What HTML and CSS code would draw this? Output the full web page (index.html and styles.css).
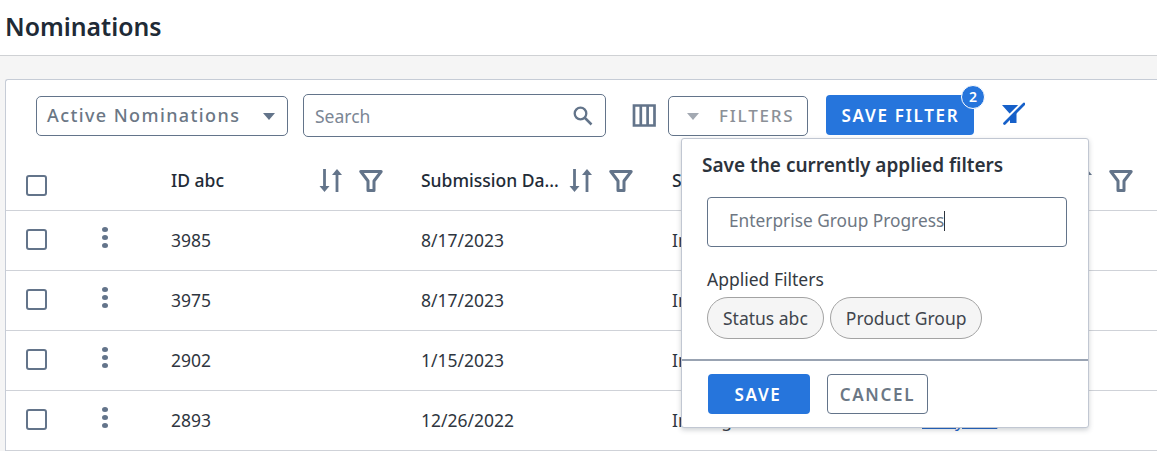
FILE: index.html
```html
<!DOCTYPE html>
<html lang="en">
<head>
<meta charset="utf-8">
<title>Nominations</title>
<link rel="stylesheet" href="styles.css">
</head>
<body>
<header class="page-head"><h1 class="title">Nominations</h1></header>
<main class="content">
  <section class="card">
    <div class="toolbar">
      <div class="select"><span>Active Nominations</span><span class="caret"></span></div>
      <div class="search"><span>Search</span>
        <svg class="search-icon" viewBox="0 0 20 20" width="20" height="20"><circle cx="7.500" cy="7.500" r="5.800" fill="none" stroke="#63748a" stroke-width="2.300"/><path d="M11.500 11.500l7 7" stroke="#63748a" stroke-width="2.500" fill="none"/></svg>
      </div>
      <svg class="columns-icon" viewBox="0 0 24 24" width="24" height="24"><path d="M2 2.500h20.500v20H2zM8.800 2.500v20M15.600 2.500v20" fill="none" stroke="#63748a" stroke-width="2.700"/></svg>
      <div class="filters"><span class="caret caret-light"></span><span class="filters-text">FILTERS</span></div>
      <div class="save-wrap">
        <button class="btn-primary save-filter">SAVE FILTER</button>
        <span class="badge">2</span>
      </div>
      <svg class="clear-icon" viewBox="0 0 24 24" width="24" height="24"><path d="M1 3H21L15.500 10.500V21H9V12Z" fill="#1660c9"/><path d="M3 19L21 1" stroke="#fff" stroke-width="2.600"/><path d="M2.500 22.500L23.500 1.500" stroke="#fff" stroke-width="1"/><path d="M3.500 21.500L23 2" stroke="#1660c9" stroke-width="2.700" stroke-linecap="round"/></svg>
    </div>

    <div class="row head">
      <div class="cell-check"><span class="check"></span></div>
      <div class="cell-menu"></div>
      <div class="cell col-id"><span class="label">ID abc</span><span class="icons"><svg class="sort" viewBox="0 0 24 24" width="24" height="24"><use href="#i-sort"/></svg><svg class="funnel" viewBox="0 0 24 24" width="24" height="24"><use href="#i-funnel"/></svg></span></div>
      <div class="cell col-date"><span class="label">Submission Da...</span><span class="icons"><svg class="sort" viewBox="0 0 24 24" width="24" height="24"><use href="#i-sort"/></svg><svg class="funnel" viewBox="0 0 24 24" width="24" height="24"><use href="#i-funnel"/></svg></span></div>
      <div class="cell col-status"><span class="label">Status abc</span></div>
      <div class="cell col-owner"><span class="label">Owner</span><span class="icons"><svg class="sort" viewBox="0 0 24 24" width="24" height="24"><use href="#i-sort"/></svg><svg class="funnel" viewBox="0 0 24 24" width="24" height="24"><use href="#i-funnel"/></svg></span></div>
    </div>

    <div class="row">
      <div class="cell-check"><span class="check"></span></div>
      <div class="cell-menu"><span class="kebab"><i></i><i></i><i></i></span></div>
      <div class="cell col-id">3985</div><div class="cell col-date">8/17/2023</div><div class="cell col-status">In Progress</div><div class="cell col-owner"><a class="link">Mary Lee</a></div>
    </div>
    <div class="row">
      <div class="cell-check"><span class="check"></span></div>
      <div class="cell-menu"><span class="kebab"><i></i><i></i><i></i></span></div>
      <div class="cell col-id">3975</div><div class="cell col-date">8/17/2023</div><div class="cell col-status">In Progress</div><div class="cell col-owner"><a class="link">Mary Lee</a></div>
    </div>
    <div class="row">
      <div class="cell-check"><span class="check"></span></div>
      <div class="cell-menu"><span class="kebab"><i></i><i></i><i></i></span></div>
      <div class="cell col-id">2902</div><div class="cell col-date">1/15/2023</div><div class="cell col-status">In Progress</div><div class="cell col-owner"><a class="link">Mary Lee</a></div>
    </div>
    <div class="row">
      <div class="cell-check"><span class="check"></span></div>
      <div class="cell-menu"><span class="kebab"><i></i><i></i><i></i></span></div>
      <div class="cell col-id">2893</div><div class="cell col-date">12/26/2022</div><div class="cell col-status">In Progress</div><div class="cell col-owner"><a class="link">Mary Lee</a></div>
    </div>

    <div class="popover">
      <div class="popover-body">
        <h2 class="popover-title">Save the currently applied filters</h2>
        <div class="name-input"><span class="name-text">Enterprise Group Progress</span><span class="cursor"></span></div>
        <div class="applied-label">Applied Filters</div>
        <div class="chips"><span class="chip">Status abc</span><span class="chip">Product Group</span></div>
      </div>
      <div class="popover-foot">
        <button class="btn-primary btn-save">SAVE</button>
        <button class="btn-cancel">CANCEL</button>
      </div>
    </div>
  </section>
</main>
<svg class="defs" width="0" height="0" aria-hidden="true">
  <defs>
    <g id="i-sort"><path d="M5.500 0v18" stroke="#63748a" stroke-width="2.800" fill="none"/><path d="M.5 17h10l-5 6z" fill="#63748a"/><path d="M18 5v18" stroke="#63748a" stroke-width="2.800" fill="none"/><path d="M13 6h10L18 0z" fill="#63748a"/></g>
    <g id="i-funnel"><path d="M1.800 2.500h20.400l-7.200 9.500v9.500h-6V12z" fill="none" stroke="#63748a" stroke-width="3" stroke-linejoin="round"/></g>
  </defs>
</svg>
</body>
</html>
```
FILE: styles.css
```css
* { box-sizing: border-box; }
html, body { margin: 0; height: 100%; overflow: hidden; }
body { font-family: "Noto Sans", "Open Sans", sans-serif; background: #f5f5f5; color: #2f3640; width: 1157px; height: 451px; }
.defs { display: block; height: 0; position: absolute; }
.page-head { height: 56px; background: #fff; border-bottom: 1px solid #cfd1d4; padding: 9px 0 0 5px; }
.title { margin: 0; font-size: 24.800px; line-height: 34px; font-weight: 600; color: #202a36; }
.content { padding: 23px 0 0 5px; }
.card { position: relative; background: #fff; border: 1px solid #c6ccd6; border-right: 0; border-bottom: 0; border-radius: 3px 0 0 0; height: 372px; }
.toolbar { height: 71px; display: flex; align-items: flex-start; padding: 14px 0 0 30px; }
.select { width: 252px; height: 40px; margin-top: 2px; border: 1px solid #63748a; border-radius: 5px; display: flex; align-items: center; justify-content: space-between; padding: 0 12px 0 10px; font-size: 18px; line-height: 24px; font-weight: 500; letter-spacing: 1.400px; color: #6b7785; }
.select span:first-child { position: relative; top: -1px; }
.caret { width: 0; height: 0; border-left: 6.500px solid transparent; border-right: 6.500px solid transparent; border-top: 7px solid #63748a; }
.caret-light { border-top-color: #a3a9b2; }
.search { width: 303px; height: 43px; margin-left: 15px; border: 1px solid #63748a; border-radius: 5px; display: flex; align-items: center; justify-content: space-between; padding: 0 12px 0 11px; font-size: 17.500px; color: #7b8694; }
.search-icon { display: block; }
.columns-icon { margin: 9px 0 0 26px; flex: none; }
.filters { width: 140px; height: 40px; margin: 2px 0 0 12px; border: 1px solid #63748a; border-radius: 5px; display: flex; align-items: center; gap: 20px; padding-left: 18px; font-size: 17px; font-weight: 500; letter-spacing: 1.800px; color: #8b9097; }
.filters-text { position: relative; top: -1px; }
.save-wrap { position: relative; margin: 1px 0 0 18px; }
.btn-primary { background: #2675dc; color: #fff; border: 0; border-radius: 4px; font-family: inherit; font-weight: 600; font-size: 17px; letter-spacing: 1.700px; }
.save-filter { display: block; width: 148px; height: 40px; padding: 0 0 0 1px; }
.badge { position: absolute; top: -10px; right: -11px; width: 24px; height: 24px; border: 1px solid #fff; border-radius: 50%; background: #2675dc; color: #fff; font-size: 14px; font-weight: 600; line-height: 22px; text-align: center; }
.clear-icon { margin: 8px 0 0 27px; flex: none; }
.row { height: 60px; display: flex; align-items: center; border-bottom: 1px solid #cfd2d8; font-size: 17.500px; color: #2f3640; }
.row .cell { position: relative; top: -1px; }
.row.head { font-weight: 500; color: #222b36; }
.row.head .cell { position: static; }
.cell-check { width: 65px; padding-left: 20px; flex: none; display: flex; }
.check { width: 21px; height: 21px; border: 2px solid #63748a; border-radius: 3px; display: block; position: relative; top: -1px; }
.head .check { top: 5px; }
.cell-menu { width: 100px; flex: none; padding-left: 31px; }
.kebab { display: flex; flex-direction: column; gap: 3px; width: 6px; position: relative; top: -3px; }
.kebab i { width: 6px; height: 5px; border-radius: 50%; background: #63748a; display: block; }
.cell { flex: none; display: flex; align-items: center; }
.col-id { width: 250px; }
.col-date { width: 251px; }
.col-status { width: 250px; }
.col-owner { flex: 1; }
.label { display: block; }
.icons { display: flex; gap: 16px; position: absolute; }
.col-id .icons { left: 313px; }
.col-date .icons { left: 563px; }
.col-owner .icons { left: 1063px; }
.row.head .label { position: relative; top: -1px; }
.link { color: #1f63c9; text-decoration: underline; }
.popover { position: absolute; left: 675px; top: 58px; width: 408px; height: 290px; background: #fff; border: 1px solid #c1c7d2; border-radius: 3px; box-shadow: 0 2px 5px rgba(60, 70, 85, .25); display: flex; flex-direction: column; }
.popover-body { height: 222px; padding: 13px 20px 0 20px; border-bottom: 2px solid #99a3b2; }
.popover-title { margin: 0 0 18px; font-size: 19px; line-height: 27px; font-weight: 600; color: #2c333c; }
.name-input { width: 360px; height: 50px; margin-left: 5px; border: 1px solid #63748a; border-radius: 4px; display: flex; align-items: center; padding-left: 21px; font-size: 17.300px; color: #6e7783; }
.name-text { position: relative; top: -2px; }
.cursor { width: 1px; height: 20px; background: #2c333c; position: relative; top: -1px; }
.applied-label { margin: 20px 0 6px 5px; font-size: 17.500px; line-height: 24px; color: #343a42; }
.chips { display: flex; gap: 6px; margin-left: 5px; }
.chip { height: 42px; padding: 0 15px; border: 1px solid #a3a3a3; border-radius: 21px; background: #f5f5f5; display: flex; align-items: center; font-size: 17.500px; color: #3f454d; }
.popover-foot { display: flex; gap: 17px; padding: 13px 0 0 26px; }
.btn-save { width: 102px; height: 40px; padding: 0 2px 0 0; }
.btn-cancel { width: 101px; height: 40px; padding: 0; background: #fff; border: 1px solid #63748a; border-radius: 4px; font-family: inherit; font-size: 17px; font-weight: 600; letter-spacing: 1.700px; color: #6b7785; }
```
